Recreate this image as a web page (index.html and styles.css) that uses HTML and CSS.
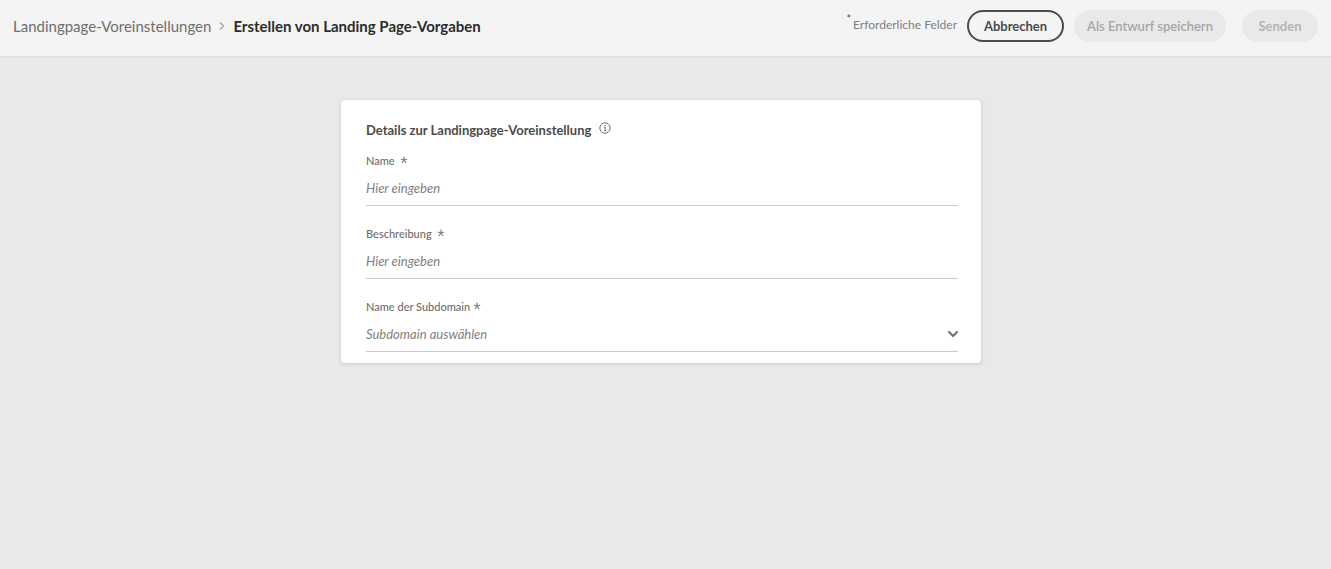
FILE: index.html
```html
<!DOCTYPE html>
<html lang="de">
<head>
  <meta charset="utf-8">
  <meta name="viewport" content="width=device-width, initial-scale=1">
  <title>Erstellen von Landing Page-Vorgaben</title>
  <link rel="stylesheet" href="styles.css">
</head>
<body>
  <header class="topbar">
    <nav class="breadcrumb" aria-label="Breadcrumb">
      <a class="breadcrumb-link" href="#">Landingpage-Voreinstellungen</a>
      <svg class="breadcrumb-chevron" viewBox="0 0 6 10" aria-hidden="true"><path d="M1 1.4 4.6 5 1 8.6"/></svg>
      <h1 class="breadcrumb-current">Erstellen von Landing Page-Vorgaben</h1>
    </nav>
    <div class="actions">
      <p class="required-note"><span class="required-star">*</span>Erforderliche Felder</p>
      <button class="button button-outline" type="button">Abbrechen</button>
      <button class="button button-draft" type="button" disabled>Als Entwurf speichern</button>
      <button class="button button-submit" type="submit" form="preset" disabled>Senden</button>
    </div>
  </header>
  <main class="content">
    <form class="card" id="preset">
      <div class="card-head">
        <h2 class="card-title">Details zur Landingpage-Voreinstellung</h2>
        <svg class="info" viewBox="0 0 12 12" aria-hidden="true"><circle cx="6" cy="6" r="5.2"/><path d="M5 5.2h1.2v3.4M5 8.6h2.2"/><rect x="5.4" y="2.8" width="1.2" height="1.2"/></svg>
      </div>
      <div class="field">
        <label class="label" for="name">Name <svg class="asterisk asterisk-spaced" viewBox="0 0 8 8" aria-hidden="true"><path d="M4 4V.6M4 4 .8 3M4 4l3.2-1M4 4 2 6.9M4 4l2 2.9"/></svg></label>
        <input class="control" id="name" type="text" placeholder="Hier eingeben" required>
      </div>
      <div class="field">
        <label class="label" for="description">Beschreibung <svg class="asterisk asterisk-spaced" viewBox="0 0 8 8" aria-hidden="true"><path d="M4 4V.6M4 4 .8 3M4 4l3.2-1M4 4 2 6.9M4 4l2 2.9"/></svg></label>
        <input class="control" id="description" type="text" placeholder="Hier eingeben" required>
      </div>
      <div class="field">
        <label class="label" for="subdomain">Name der Subdomain <svg class="asterisk" viewBox="0 0 8 8" aria-hidden="true"><path d="M4 4V.6M4 4 .8 3M4 4l3.2-1M4 4 2 6.9M4 4l2 2.9"/></svg></label>
        <div class="select-wrap">
          <select class="control" id="subdomain" required>
            <option value="">Subdomain auswählen</option>
          </select>
          <svg class="select-chevron" viewBox="0 0 10 6" aria-hidden="true"><path d="M1 1 5 5l4-4"/></svg>
        </div>
      </div>
    </form>
  </main>
</body>
</html>
```

FILE: styles.css
```css
* {
  box-sizing: border-box;
}

body {
  margin: 0;
  min-height: 100vh;
  background: #e9e9e9;
  color: #4b4b4b;
  font-family: Lato, "Open Sans", sans-serif;
  font-size: 13px;
}

.topbar {
  display: flex;
  align-items: center;
  justify-content: space-between;
  min-height: 58px;
  padding: 0 13px;
  background: #f4f4f4;
  border-bottom: 2px solid #e1e1e1;
}

.breadcrumb {
  display: flex;
  align-items: center;
  gap: 8px;
  padding-bottom: 4px;
  font-size: 15px;
  line-height: 20px;
}

.breadcrumb-link {
  color: #6e6e6e;
  text-decoration: none;
}

.breadcrumb-chevron {
  width: 6px;
  height: 10px;
  fill: none;
  stroke: #a8a8a8;
  stroke-width: 1.4;
}

.breadcrumb-current {
  margin: 0;
  color: #2c2c2c;
  font-size: 15px;
  font-weight: 700;
}

.actions {
  display: flex;
  align-items: center;
  padding-bottom: 4px;
}

.required-note {
  display: flex;
  margin: 0 10px 2px 0;
  color: #808080;
  font-size: 12px;
  line-height: 16px;
}

.required-star {
  margin-right: 2px;
  color: #4b4b4b;
  font-size: 11px;
  line-height: 4px;
}

.button {
  height: 32px;
  padding: 0 13px;
  border: 0;
  border-radius: 16px;
  background: #e9e9e9;
  font-family: inherit;
  font-size: 13px;
  font-weight: 700;
  white-space: nowrap;
}

.button-outline {
  min-width: 97px;
  border: 2px solid #4b4b4b;
  background: transparent;
  color: #4b4b4b;
}

.button-draft {
  min-width: 152px;
  margin: 0 16px 0 10px;
  color: #a6a6a6;
  font-weight: 600;
}

.button-submit {
  min-width: 76px;
  color: #b3b3b3;
}

.content {
  padding: 42px 9px 42px 0;
}

.card {
  max-width: 640px;
  margin: 0 auto;
  padding: 20px 23px 11px 25px;
  border-radius: 4px;
  background: #fff;
  box-shadow: 0 1px 4px rgba(0, 0, 0, 0.15);
}

.card-head {
  display: flex;
  align-items: flex-start;
  gap: 8px;
  height: 31px;
}

.card-title {
  margin: 0;
  font-size: 13px;
  font-weight: 700;
  line-height: 20px;
}

.info {
  width: 12px;
  height: 12px;
  margin-top: 2px;
  fill: none;
  stroke: #6e6e6e;
  stroke-width: 1;
}

.info rect {
  fill: #6e6e6e;
  stroke: none;
}

.field + .field {
  margin-top: 18px;
}

.label {
  display: flex;
  align-items: center;
  gap: 3px;
  height: 18px;
  color: #6e6e6e;
  font-size: 11px;
  font-weight: 500;
}

.asterisk {
  width: 8px;
  height: 8px;
  fill: none;
  stroke: #808080;
  stroke-width: 1.2;
}

.asterisk-spaced {
  margin-left: 2px;
}

.control {
  display: block;
  width: 100%;
  height: 37px;
  padding: 1px 0 0;
  border: 0;
  border-bottom: 1px solid #cacaca;
  border-radius: 0;
  appearance: none;
  background: transparent;
  color: #808080;
  font-family: inherit;
  font-size: 13px;
  font-style: italic;
}

.control::placeholder {
  color: #808080;
  opacity: 1;
}

.select-wrap {
  position: relative;
}

.select-chevron {
  position: absolute;
  top: 16px;
  right: 0;
  width: 10px;
  height: 6px;
  fill: none;
  stroke: #6e6e6e;
  stroke-width: 2;
  stroke-linecap: round;
  pointer-events: none;
}
```
